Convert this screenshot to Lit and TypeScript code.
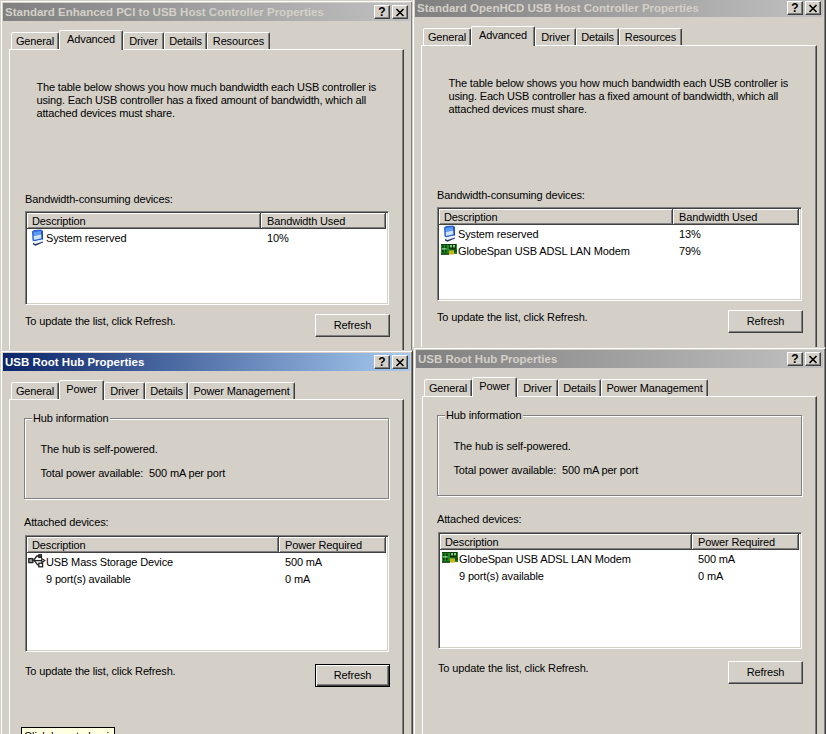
import { LitElement, html, css, svg } from "lit";
import { customElement, property } from "lit/decorators.js";

type Tab = { label: string; w: number };
type Row = { icon?: string; name: string; value: string };

const monitorIcon = svg`<svg class="ico" viewBox="0 0 16 18" width="16" height="18">
  <path d="M3 2.5 L5 1 L12 0.5 L13.5 2 L13.5 10.5 L5 12.5 L3.5 11.5 Z" fill="#2a62dc"/>
  <path d="M4.5 3 L12 2 L12.3 5.5 L4.7 7 Z" fill="#5e9cf0"/>
  <path d="M4.7 7 L12.3 5.5 L12.5 9.3 L5 11 Z" fill="#cfe3fb"/>
  <path d="M3.5 11.5 L5 12.5 L13.5 10.5 L14 12.5 L6.5 16 L4 15.5 Z" fill="#eef3fa"/>
  <path d="M4 15.5 L6.5 16.8 L14 13.6 L14 12.5 L6.5 15 L4 14 Z" fill="#24366e"/>
  <path d="M13 1.5 L13.5 10.5" stroke="#163a98" stroke-width="1.2" fill="none"/>
</svg>`;

const modemIcon = svg`<svg class="ico" viewBox="0 0 18 16" width="18" height="16">
  <rect x="1" y="1" width="16" height="10" fill="#1f8f24"/>
  <rect x="1" y="1" width="8" height="1" fill="#0b3a0b"/>
  <rect x="2" y="2.5" width="1.6" height="7" fill="#0a3a0a"/>
  <rect x="5" y="2.5" width="1.6" height="7" fill="#0a3a0a"/>
  <rect x="2" y="5.3" width="4.6" height="1.2" fill="#a8e0a8"/>
  <rect x="9" y="1" width="7" height="5.5" fill="#0c350c"/>
  <rect x="10" y="2" width="2" height="2.4" fill="#7fd07f"/>
  <rect x="13" y="2" width="2" height="2.4" fill="#7fd07f"/>
  <rect x="9" y="7.5" width="5" height="4" fill="#c9b516"/>
  <rect x="14" y="6.5" width="3" height="3" fill="#134f13"/>
  <rect x="1" y="10.5" width="8" height="1.3" fill="#0b2f0b"/>
</svg>`;

const usbIcon = svg`<svg class="ico" viewBox="0 0 18 16" width="18" height="16">
  <g fill="none" stroke="#222" stroke-width="1.3">
    <rect x="0.8" y="4.6" width="4" height="4" fill="#9a9a9a"/>
    <path d="M4.8 6.6 H14"/>
    <path d="M5.6 6.4 L8.8 2 H11"/>
    <path d="M6.6 6.8 L9.6 10.8 H11"/>
    <rect x="10.8" y="0.8" width="2.6" height="2.6" fill="#555"/>
    <rect x="10.8" y="9.2" width="3.8" height="3.6" fill="#fff"/>
  </g>
  <path d="M13.2 3.4 L17.8 6.6 L13.2 9.8 Z" fill="#222"/>
  <path d="M14.4 5.6 L15.8 6.6 L14.4 7.6 Z" fill="#eee"/>
</svg>`;

const icons: Record<string, unknown> = { monitor: monitorIcon, modem: modemIcon, usb: usbIcon };

@customElement("usb-dialog")
class UsbDialog extends LitElement {
  @property() heading = "";
  @property() mode = "bandwidth";
  @property({ type: Boolean }) active = false;
  @property({ type: Array }) tabs: Tab[] = [];
  @property({ type: Number }) selected = 1;
  @property() col2 = "";
  @property({ type: Number }) col1w = 234;
  @property({ type: Array }) rows: Row[] = [];
  @property({ type: Boolean }) defaultBtn = false;

  static styles = css`
    :host { display: block; }
    .win {
      box-sizing: border-box; height: 100%; padding: 2px;
      display: flex; flex-direction: column; background: #d4d0c8;
      border: 1px solid; border-color: #d4d0c8 #404040 #404040 #d4d0c8;
      box-shadow: inset 1px 1px #fff, inset -1px -1px #808080;
      font: 11px/13px "Liberation Sans", Arial, sans-serif; color: #000;
      letter-spacing: -0.14px;
    }
    .title {
      height: 18px; flex: none; display: flex; align-items: center;
      padding: 0 2px 0 2px; gap: 2px; letter-spacing: 0;
      background: linear-gradient(90deg, #808080, #c0c0c0); color: #d4d0c8;
    }
    .active .title { background: linear-gradient(90deg, #0a246a, #a6caf0); color: #fff; }
    .name { flex: 1; font-weight: bold; font-size: 11.5px; white-space: nowrap; }
    .cap {
      box-sizing: border-box; width: 16px; height: 14px; background: #d4d0c8;
      display: flex; align-items: center; justify-content: center; color: #000;
      border: 1px solid; border-color: #fff #404040 #404040 #fff;
      box-shadow: inset -1px -1px #808080; font-weight: bold; font-size: 12px;
    }
    .cap svg { display: block; }
    .tabs { display: flex; align-items: flex-end; height: 19px; margin: 9px 6px 0 8px; flex: none; }
    .tab {
      box-sizing: border-box; height: 17px; display: flex; align-items: center; justify-content: center;
      background: #d4d0c8; border: 1px solid; border-bottom: 0;
      border-color: #fff #404040 transparent #fff; border-radius: 2px 2px 0 0;
      box-shadow: inset -1px 0 #808080; white-space: nowrap;
    }
    .tab.sel { height: 20px; margin-bottom: -1px; position: relative; z-index: 1; padding: 0 0 2px; }
    .panel {
      flex: 1; box-sizing: border-box; margin: 0 6px; display: flex; flex-direction: column;
      border: 1px solid; border-color: #fff #404040 #404040 #fff;
      box-shadow: inset -1px -1px #808080; padding: 0 13px 0 15px;
    }
    .panel.power { padding-left: 14px; }
    .intro { margin: 31px 0 0 11.5px; width: 350px; letter-spacing: -0.17px; }
    .lead { margin-top: 73px; }
    .group {
      position: relative; box-sizing: border-box; height: 81px; margin: 18px 1px 0 0;
      border: 1px solid #808080; box-shadow: 1px 1px 0 #fff, inset 1px 1px 0 #fff;
      padding: 24px 0 0 15.5px; display: flex; flex-direction: column; gap: 11px;
    }
    .legend { position: absolute; left: 7px; top: -7px; padding: 0 1px; background: #d4d0c8; }
    .power .lead { margin-top: 17px; }
    .list {
      box-sizing: border-box; height: 94px; margin: 5px 1px 0 0; background: #fff;
      border: 1px solid; border-color: #808080 #fff #fff #808080;
      box-shadow: inset 1px 1px #404040, inset -1px -1px #d4d0c8;
      padding: 1px 1px 0 1px; overflow: hidden;
    }
    .power .list { height: 117px; margin: 6px 1px 0 1px; }
    .head { display: flex; height: 16px; background: #d4d0c8; margin-right: 1px; }
    .hc {
      box-sizing: border-box; height: 16px; display: flex; align-items: center; padding: 2px 0 0 5px;
      border-right: 1px solid #404040; border-bottom: 1px solid #404040;
      box-shadow: inset 1px 1px #fff, inset -1px -1px #808080;
    }
    .hc.last { flex: 1; padding-left: 6px; }
    .row { display: flex; height: 17px; align-items: center; padding-top: 1px; box-sizing: border-box; }
    .c1 { display: flex; align-items: center; box-sizing: border-box; }
    .slot { width: 19px; height: 13px; flex: none; display: flex; justify-content: center; align-items: center; overflow: visible; }
    .ico { display: block; flex: none; }
    .v { padding-left: 6px; }
    .foot { display: flex; justify-content: space-between; align-items: flex-start; margin-top: 9px; }
    .power .foot { margin: 12px 0 0 1px; }
    .foot span { margin-top: 1px; }
    .btn {
      box-sizing: border-box; width: 75px; height: 23px; display: flex; align-items: center; justify-content: center;
      border: 1px solid; border-color: #fff #404040 #404040 #fff;
      box-shadow: inset -1px -1px #808080;
    }
    .btn.def { border-color: #000; box-shadow: inset 1px 1px #fff, inset -1px -1px #404040, inset -2px -2px #808080; }
  `;

  render() {
    return html`<div class="win ${this.active ? "active" : ""}">
      <div class="title">
        <div class="name">${this.heading}</div>
        <div class="cap">?</div>
        <div class="cap"><svg width="10" height="9" viewBox="0 0 10 9"><path d="M1.5 1 L8.5 8 M8.5 1 L1.5 8" stroke="#000" stroke-width="1.6" fill="none"/></svg></div>
      </div>
      <div class="tabs">
        ${this.tabs.map(
          (t, i) => html`<div class="tab ${i === this.selected ? "sel" : ""}" style="width:${t.w}px">${t.label}</div>`
        )}
      </div>
      <div class="panel ${this.mode}">
        ${this.mode === "bandwidth"
          ? html`<div class="intro">The table below shows you how much bandwidth each USB controller is using. Each USB controller has a fixed amount of bandwidth, which all attached devices must share.</div>
              <div class="lead">Bandwidth-consuming devices:</div>`
          : html`<div class="group">
                <div class="legend">Hub information</div>
                <div>The hub is self-powered.</div>
                <div>Total power available:&nbsp; 500 mA per port</div>
              </div>
              <div class="lead">Attached devices:</div>`}
        <div class="list">
          <div class="head">
            <div class="hc" style="width:${this.col1w}px">Description</div>
            <div class="hc last">${this.col2}</div>
          </div>
          ${this.rows.map(
            (r) => html`<div class="row">
              <div class="c1" style="width:${this.col1w}px">
                <span class="slot">${r.icon ? icons[r.icon] : ""}</span>
                <span>${r.name}</span>
              </div>
              <div class="v">${r.value}</div>
            </div>`
          )}
        </div>
        <div class="foot">
          <span>To update the list, click Refresh.</span>
          <div class="btn ${this.defaultBtn ? "def" : ""}">Refresh</div>
        </div>
      </div>
    </div>`;
  }
}

const bandwidthTabs: Tab[] = [
  { label: "General", w: 48 },
  { label: "Advanced", w: 64 },
  { label: "Driver", w: 41 },
  { label: "Details", w: 43 },
  { label: "Resources", w: 63 },
];
const powerTabs: Tab[] = [
  { label: "General", w: 48 },
  { label: "Power", w: 45 },
  { label: "Driver", w: 41 },
  { label: "Details", w: 43 },
  { label: "Power Management", w: 107 },
];

@customElement("app-root")
export class AppRoot extends LitElement {
  static styles = css`
    :host { display: block; position: relative; width: 826px; height: 734px; overflow: hidden; background: #d4d0c8; }
    usb-dialog { position: absolute; }
    .w1 { left: 0; top: 0; width: 413px; height: 400px; }
    .w2 { left: 412px; top: -4px; width: 414px; height: 400px; }
    .w3 { left: 0; top: 350px; width: 413px; height: 420px; }
    .w4 { left: 413px; top: 347px; width: 413px; height: 420px; }
    .tip {
      position: absolute; left: 21px; top: 727px; width: 94px; height: 20px; box-sizing: border-box;
      background: #ffffe1; border: 1px solid #000; padding: 2px 0 0 2px; white-space: nowrap; overflow: hidden;
      font: 11px/13px "Liberation Sans", Arial, sans-serif; color: #000;
    }
  `;
  render() {
    return html`
      <usb-dialog class="w1" heading="Standard Enhanced PCI to USB Host Controller Properties" .tabs=${bandwidthTabs}
        col2="Bandwidth Used" .col1w=${234}
        .rows=${[{ icon: "monitor", name: "System reserved", value: "10%" }]}></usb-dialog>
      <usb-dialog class="w2" heading="Standard OpenHCD USB Host Controller Properties" .tabs=${bandwidthTabs}
        col2="Bandwidth Used" .col1w=${234}
        .rows=${[
          { icon: "monitor", name: "System reserved", value: "13%" },
          { icon: "modem", name: "GlobeSpan USB ADSL LAN Modem", value: "79%" },
        ]}></usb-dialog>
      <usb-dialog class="w4" heading="USB Root Hub Properties" mode="power" .tabs=${powerTabs}
        col2="Power Required" .col1w=${252}
        .rows=${[
          { icon: "modem", name: "GlobeSpan USB ADSL LAN Modem", value: "500 mA" },
          { name: "9 port(s) available", value: "0 mA" },
        ]}></usb-dialog>
      <usb-dialog class="w3" active defaultBtn heading="USB Root Hub Properties" mode="power" .tabs=${powerTabs}
        col2="Power Required" .col1w=${252}
        .rows=${[
          { icon: "usb", name: "USB Mass Storage Device", value: "500 mA" },
          { name: "9 port(s) available", value: "0 mA" },
        ]}></usb-dialog>
      <div class="tip">Click here to begin</div>
    `;
  }
}
